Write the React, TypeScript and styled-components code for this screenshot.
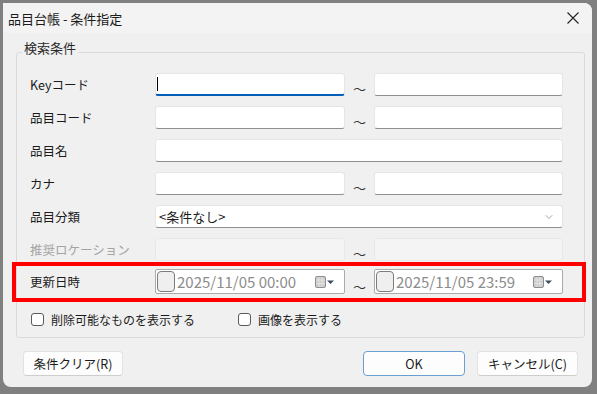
import React from 'react';
import styled, { createGlobalStyle, css } from 'styled-components';
import { ChevronDown } from 'lucide-react';

const GlobalStyle = createGlobalStyle`
  html, body { margin: 0; padding: 0; background: #808080; }
  body {
    width: 597px;
    height: 394px;
    overflow: hidden;
    font-family: "Noto Sans CJK JP", "Noto Sans", sans-serif;
    color: #1b1b1b;
  }
`;

const Screen = styled.div`
  width: 597px;
  height: 394px;
  box-sizing: border-box;
  padding: 3px 5px 7px 3px;
`;

const Window = styled.div`
  width: 589px;
  height: 384px;
  background: #f0f0f0;
  border-radius: 0 8px 8px 8px;
  display: flex;
  flex-direction: column;
  overflow: hidden;
`;

const TitleBar = styled.div`
  height: 30px;
  flex: none;
  display: flex;
  align-items: center;
  padding: 0 13px 0 5px;
  background: #f3f3f3;
  font-size: 13px;
`;

const CloseButton = styled.div`
  margin-left: auto;
  width: 12px;
  height: 12px;
  display: flex;
`;

const Body = styled.div`
  padding: 8px 7px 0 13px;
  display: flex;
  flex-direction: column;
`;

const GroupBox = styled.fieldset`
  margin: 0;
  border: 1px solid #dadada;
  border-radius: 3px;
  padding: 10px 21px 12px 13px;
  display: flex;
  flex-direction: column;
  min-width: 0;
`;

const Legend = styled.legend`
  font-size: 13px;
  line-height: 14px;
  padding: 0 2px 8px;
  margin-left: -8px;
  color: #2a2a2a;
`;

const FormGrid = styled.div<{ $rowHeight: number }>`
  display: grid;
  grid-template-columns: 125px 190px 29px 189px;
  grid-auto-rows: ${p => p.$rowHeight}px;
  row-gap: 10px;
`;

const Label = styled.div<{ $disabled?: boolean }>`
  align-self: center;
  font-size: 12.5px;
  color: ${p => (p.$disabled ? '#a3a3a3' : '#1b1b1b')};
  white-space: nowrap;
`;

const Tilde = styled.div`
  align-self: end;
  text-align: center;
  font-size: 13px;
  line-height: 1;
  padding-bottom: 1px;
  color: #333;
`;

const TextBox = styled.div<{ $focused?: boolean; $disabled?: boolean; $wide?: boolean }>`
  box-sizing: border-box;
  background: #ffffff;
  border: 1px solid #e6e6e6;
  border-bottom-color: #8f8f8f;
  border-radius: 3px;
  display: flex;
  align-items: center;
  padding: 0 7px 0 3px;
  font-size: 13px;
  ${p => p.$wide && css`grid-column: 2 / 5;`}
  ${p => p.$focused && css`
    border-bottom: 2px solid #005fb8;
    padding-left: 1px;
  `}
  ${p => p.$disabled && css`
    background: #f4f4f4;
    border-color: #e8e8e8;
  `}
`;

const Caret = styled.span`
  width: 1px;
  height: 14px;
  background: #000;
`;

const SelectText = styled.span`
  flex: 1;
`;

const Highlight = styled.div`
  margin: 1px -23px 0 -18px;
  border: 4px solid #ff0000;
  padding: 3px 19px 4px 14px;
`;

const DateBox = styled.div`
  box-sizing: border-box;
  background: #ffffff;
  border: 1px solid #ababab;
  border-radius: 2px;
  display: flex;
  align-items: center;
  padding: 0 10px 0 1px;
`;

const DateCheck = styled.span`
  box-sizing: border-box;
  width: 18px;
  height: 21px;
  border: 1px solid #7c7c7c;
  border-radius: 4px;
  background: #efefef;
  flex: none;
`;

const DateText = styled.span`
  margin-left: 2px;
  font-size: 15px;
  color: #8c8c8c;
  white-space: nowrap;
`;

const CalendarButton = styled.span`
  margin-left: auto;
  display: flex;
  align-items: center;
`;

const CheckRow = styled.div`
  margin-top: 9px;
  padding-left: 1px;
  display: grid;
  grid-template-columns: 207px auto;
  height: 14px;
  align-items: center;
`;

const CheckItem = styled.label`
  display: flex;
  align-items: center;
  gap: 7px;
  font-size: 12px;
  white-space: nowrap;
`;

const CheckSquare = styled.span`
  box-sizing: border-box;
  width: 13px;
  height: 13px;
  border: 1px solid #5a5a5a;
  border-radius: 3px;
  background: #fff;
  flex: none;
`;

const ButtonRow = styled.div`
  margin-top: 13px;
  padding: 0 7px 0 7px;
  display: flex;
  gap: 12px;
`;

const Button = styled.button<{ $width: number; $primary?: boolean; $push?: boolean }>`
  width: ${p => p.$width}px;
  height: 25px;
  box-sizing: border-box;
  background: #fdfdfd;
  border: 1px solid #e2e2e2;
  border-bottom-color: #cdcdcd;
  border-radius: 4px;
  font-family: inherit;
  font-size: 12.5px;
  color: #1b1b1b;
  padding: 0;
  ${p => p.$push && css`margin-right: auto;`}
  ${p => p.$primary && css`
    border: 1px solid #6b9fd2;
  `}
`;

const CalendarIcon = () => (
  <svg width="19" height="12" viewBox="0 0 19 12">
    <rect x="0.5" y="0.5" width="10" height="11" rx="1.5" fill="#cdcdcd" stroke="#8e8e8e" />
    <path d="M4 1v10M7 1v10M1 4h9M1 7.5h9" stroke="#e6e6e6" strokeWidth="0.8" />
    <path d="M12 4.5h7l-3.5 3.5z" fill="#3d4c60" />
  </svg>
);

const DatePicker = ({ value }: { value: string }) => (
  <DateBox>
    <DateCheck />
    <DateText>{value}</DateText>
    <CalendarButton>
      <CalendarIcon />
    </CalendarButton>
  </DateBox>
);

export default function App() {
  return (
    <>
      <GlobalStyle />
      <Screen>
        <Window>
          <TitleBar>
            品目台帳 - 条件指定
            <CloseButton>
              <svg width="12" height="12" viewBox="0 0 12 12">
                <path d="M0.5 0.5l11 11M11.5 0.5l-11 11" stroke="#222" strokeWidth="1.1" />
              </svg>
            </CloseButton>
          </TitleBar>
          <Body>
            <GroupBox>
              <Legend>検索条件</Legend>
              <FormGrid $rowHeight={23}>
                <Label>Keyコード</Label>
                <TextBox $focused>
                  <Caret />
                </TextBox>
                <Tilde>～</Tilde>
                <TextBox />

                <Label>品目コード</Label>
                <TextBox />
                <Tilde>～</Tilde>
                <TextBox />

                <Label>品目名</Label>
                <TextBox $wide />

                <Label>カナ</Label>
                <TextBox />
                <Tilde>～</Tilde>
                <TextBox />

                <Label>品目分類</Label>
                <TextBox $wide>
                  <SelectText>&lt;条件なし&gt;</SelectText>
                  <ChevronDown size={12} color="#8a8a8a" strokeWidth={1.5} />
                </TextBox>

                <Label $disabled>推奨ロケーション</Label>
                <TextBox $disabled />
                <Tilde>～</Tilde>
                <TextBox $disabled />
              </FormGrid>

              <Highlight>
                <FormGrid $rowHeight={25}>
                  <Label>更新日時</Label>
                  <DatePicker value="2025/11/05 00:00" />
                  <Tilde>～</Tilde>
                  <DatePicker value="2025/11/05 23:59" />
                </FormGrid>
              </Highlight>

              <CheckRow>
                <CheckItem>
                  <CheckSquare />
                  削除可能なものを表示する
                </CheckItem>
                <CheckItem>
                  <CheckSquare />
                  画像を表示する
                </CheckItem>
              </CheckRow>
            </GroupBox>

            <ButtonRow>
              <Button $width={100} $push>条件クリア(R)</Button>
              <Button $width={102} $primary>OK</Button>
              <Button $width={101}>キャンセル(C)</Button>
            </ButtonRow>
          </Body>
        </Window>
      </Screen>
    </>
  );
}
